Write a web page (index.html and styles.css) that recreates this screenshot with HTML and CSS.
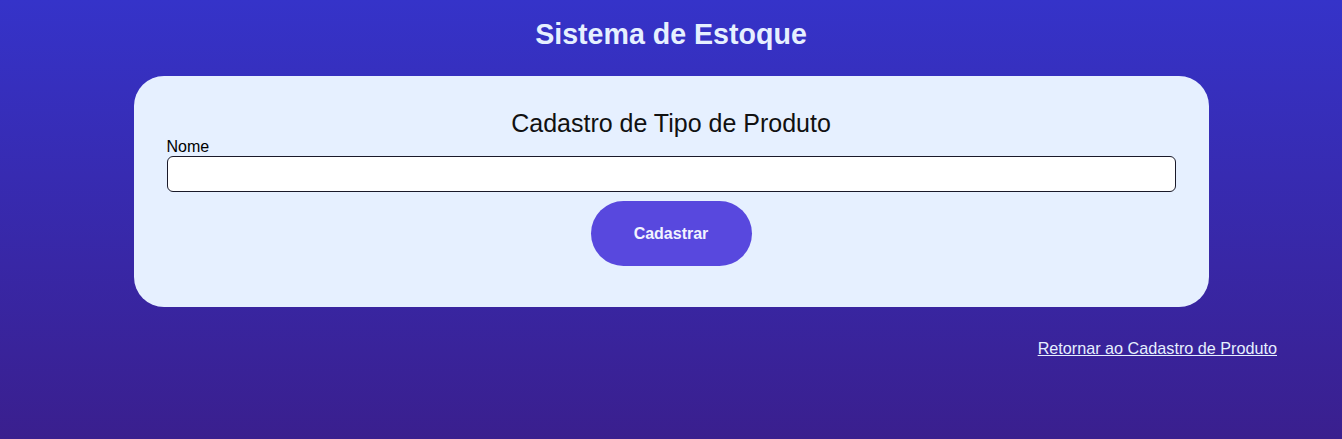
FILE: index.html
```html
<!DOCTYPE html>
<html lang="pt-BR">
<head>
<meta charset="utf-8">
<title>Sistema de Estoque</title>
<link rel="stylesheet" href="styles.css">
</head>
<body>
  <header class="site-header">
    <h1 class="site-title">Sistema de Estoque</h1>
  </header>
  <main class="card">
    <h2 class="card-title">Cadastro de Tipo de Produto</h2>
    <form class="form">
      <label class="label" for="nome">Nome</label>
      <input class="input" id="nome" type="text">
      <button class="btn" type="button">Cadastrar</button>
    </form>
  </main>
  <nav class="back">
    <a class="back-link" href="#">Retornar ao Cadastro de Produto</a>
  </nav>
</body>
</html>
```
FILE: styles.css
```css
html, body {
  margin: 0;
  padding: 0;
}
body {
  min-height: 439px;
  background: linear-gradient(to bottom, #3533c9 0%, #3a1f8e 100%);
  font-family: "Liberation Sans", Arial, sans-serif;
  color: #111;
}
.site-header {
  display: flex;
  justify-content: center;
  padding-top: 17px;
  height: 76px;
  box-sizing: border-box;
}
.site-title {
  margin: 0;
  font-size: 28.6px;
  line-height: 34px;
  font-weight: bold;
  color: #e6f0ff;
}
.card {
  width: 1075px;
  margin: 0 auto;
  box-sizing: border-box;
  background: #e6f0ff;
  border-radius: 30px;
  padding: 33px 33px 41px;
}
.card-title {
  margin: 0;
  text-align: center;
  font-size: 25px;
  line-height: 29px;
  font-weight: normal;
  color: #111;
}
.form {
  display: flex;
  flex-direction: column;
  align-items: center;
}
.label {
  align-self: flex-start;
  font-size: 16px;
  line-height: 18px;
  color: #000;
}
.input {
  align-self: stretch;
  height: 36px;
  box-sizing: border-box;
  border: 1px solid #1a1a2a;
  border-radius: 6px;
  background: #fff;
  margin: 0;
}
.btn {
  margin-top: 9px;
  width: 161px;
  height: 65px;
  border: none;
  border-radius: 33px;
  background: #5848de;
  color: #f2f4ff;
  font-family: "Liberation Sans", Arial, sans-serif;
  font-size: 16px;
  font-weight: bold;
}
.back {
  display: flex;
  justify-content: flex-end;
  padding: 32px 65px 0 0;
}
.back-link {
  color: #e6f0ff;
  font-size: 16.2px;
  line-height: 18px;
}
```
